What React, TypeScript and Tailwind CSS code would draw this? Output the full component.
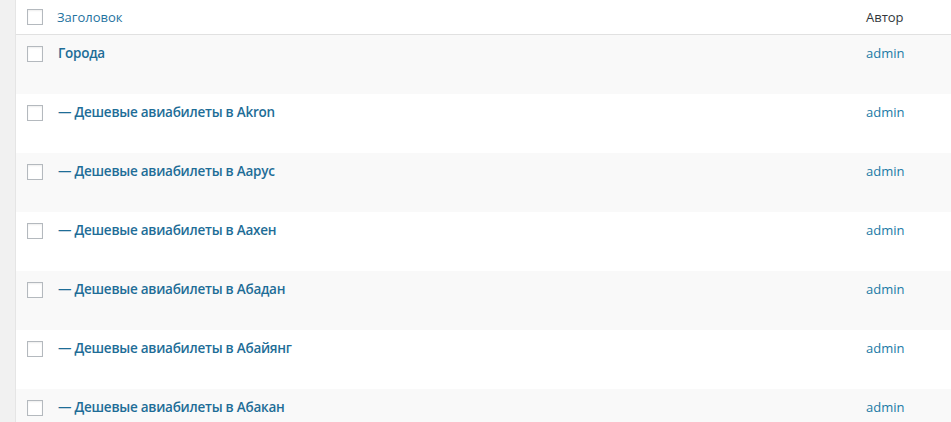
import React from "react";

const rows = [
  "Города",
  "— Дешевые авиабилеты в Akron",
  "— Дешевые авиабилеты в Аарус",
  "— Дешевые авиабилеты в Аахен",
  "— Дешевые авиабилеты в Абадан",
  "— Дешевые авиабилеты в Абайянг",
  "— Дешевые авиабилеты в Абакан",
];

function Box() {
  return <div className="w-4 h-4 border border-[#b4b9be] bg-white shadow-[inset_0_1px_2px_rgba(0,0,0,0.07)]" />;
}

export default function App() {
  return (
    <div className="flex w-[951px] h-[422px] overflow-hidden bg-[#f1f1f1]" style={{ fontFamily: '"Open Sans", "Noto Sans", sans-serif' }}>
      <div className="w-[15px] shrink-0" />
      <div className="flex-1 bg-white border-l border-[#e5e5e5] flex flex-col">
        <div className="h-[35px] shrink-0 flex border-b border-[#e1e1e1]">
          <div className="w-[41px] pl-[11px] pt-[9px] shrink-0"><Box /></div>
          <div className="flex-1 text-[13px] leading-[20px] pt-[7px] text-[#1f73a0]">Заголовок</div>
          <div className="w-[85px] shrink-0 text-[13px] leading-[20px] pt-[7px] text-[#32373c]">Автор</div>
        </div>
        {rows.map((t, i) => (
          <div key={i} className={`h-[59px] shrink-0 flex ${i % 2 === 0 ? "bg-[#f9f9f9]" : "bg-white"}`}>
            <div className="w-[41px] pl-[11px] pt-[11px] shrink-0"><Box /></div>
            <div className="flex-1 text-[13.5px] tracking-[-0.25px] font-semibold leading-[20px] pt-[8px] pl-px text-[#1e6d97]">{t}</div>
            <div className="w-[85px] shrink-0 text-[13px] leading-[20px] pt-[8px] text-[#2079a5]">admin</div>
          </div>
        ))}
      </div>
    </div>
  );
}
